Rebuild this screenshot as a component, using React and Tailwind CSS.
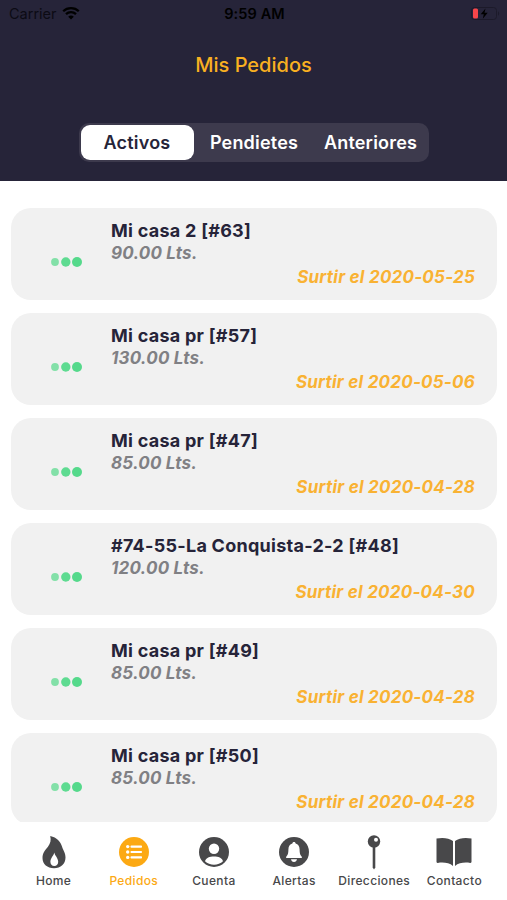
import React, { useState } from "react";

const orders = [
  { id: 63, name: "Mi casa 2", liters: "90.00", date: "2020-05-25" },
  { id: 57, name: "Mi casa pr", liters: "130.00", date: "2020-05-06" },
  { id: 47, name: "Mi casa pr", liters: "85.00", date: "2020-04-28" },
  { id: 48, name: "#74-55-La Conquista-2-2", liters: "120.00", date: "2020-04-30" },
  { id: 49, name: "Mi casa pr", liters: "85.00", date: "2020-04-28" },
  { id: 50, name: "Mi casa pr", liters: "85.00", date: "2020-04-28" },
];

const segments = ["Activos", "Pendietes", "Anteriores"];

const HomeIcon = () => (
  <svg width="24" height="34" viewBox="0 0 24 34" fill="currentColor">
    <path
      fillRule="evenodd"
      d="M8.200 1C15 2.500 18.500 6.500 20 11.500 21.200 15.500 23.500 17.500 23.500 22.500 23.500 29 18.700 33.300 12 33.300S.5 29 .5 23C.5 18 2.800 15.500 5.800 12 8.500 8.500 9.300 5 8.200 1zM12.300 17.500c-.4 3-3.900 5.500-3.900 9.300 0 2.600 1.500 4.200 3.900 4.200s3.900-1.600 3.900-4.200c0-3.800-3.500-6.300-3.900-9.300z"
    />
  </svg>
);

const ListIcon = () => (
  <svg width="30" height="30" viewBox="0 0 30 30">
    <circle cx="15" cy="15" r="15" fill="currentColor" />
    <g fill="#fff">
      <circle cx="8.700" cy="9.600" r="1.700" />
      <circle cx="8.700" cy="15" r="1.700" />
      <circle cx="8.700" cy="20.400" r="1.700" />
      <rect x="11.500" y="8.500" width="11.500" height="2.200" rx="0.800" />
      <rect x="11.500" y="13.900" width="11.500" height="2.200" rx="0.800" />
      <rect x="11.500" y="19.300" width="11.500" height="2.200" rx="0.800" />
    </g>
  </svg>
);

const UserIcon = () => (
  <svg width="30" height="30" viewBox="0 0 30 30">
    <circle cx="15" cy="15" r="15" fill="currentColor" />
    <circle cx="15" cy="11.800" r="5.200" fill="#fff" />
    <path d="M6 24.200c1-3.300 4.600-4.700 9-4.700s8 1.400 9 4.700c-2.300 2.300-5.600 3.500-9 3.500s-6.700-1.200-9-3.500z" fill="#fff" />
  </svg>
);

const BellIcon = () => (
  <svg width="30" height="30" viewBox="0 0 30 30">
    <circle cx="15" cy="15" r="15" fill="currentColor" />
    <path
      d="M15 5c-1 0-1.600.7-1.600 1.600-2.500.8-4 2.900-4 5.800 0 4.500-1 5.800-2 7-.5.500-.5 1.600.5 1.600h14.200c1 0 1-1.100.5-1.600-1-1.200-2-2.500-2-7 0-2.900-1.500-5-4-5.800C16.600 5.700 16 5 15 5zM12 22.300h6c-.2 1.600-1.400 2.700-3 2.700s-2.800-1.100-3-2.700z"
      fill="#fff"
    />
  </svg>
);

const PinIcon = () => (
  <svg width="14" height="35" viewBox="0 0 14 35">
    <path d="M5.700 11h2.600v21.500L7 34.500l-1.300-2z" fill="currentColor" />
    <circle cx="7" cy="6.500" r="6.200" fill="currentColor" />
    <circle cx="9" cy="4.700" r="2" fill="#fff" />
  </svg>
);

const BookIcon = () => (
  <svg width="36" height="30" viewBox="0 0 36 30" fill="currentColor">
    <path d="M.5 1.500C7 .3 13 1 17 4v25c-3.800-3.300-9.500-3.900-15.200-3.100-.8.100-1.300-.4-1.300-1.100z" />
    <path d="M35.500 1.500C29 .3 23 1 19 4v25c3.800-3.300 9.500-3.900 15.200-3.100.8.100 1.300-.4 1.300-1.100z" />
  </svg>
);

const tabs = [
  { label: "Home", icon: HomeIcon },
  { label: "Pedidos", icon: ListIcon },
  { label: "Cuenta", icon: UserIcon },
  { label: "Alertas", icon: BellIcon },
  { label: "Direcciones", icon: PinIcon },
  { label: "Contacto", icon: BookIcon },
];

const StatusBar = () => (
  <div className="grid h-7 grid-cols-3 items-center pl-[9px] pr-[7px] text-black">
    <div className="flex items-center gap-[5px]">
      <span className="text-[14.5px] leading-none text-[#0c0b14]">Carrier</span>
      <svg className="-mt-[2px]" width="18" height="14" viewBox="0 0 18 14" fill="none" stroke="currentColor" strokeWidth="2.300">
        <path d="M1.200 5.200c4.300-4.200 11.300-4.200 15.600 0" />
        <path d="M4 8.200c2.800-2.700 7.200-2.700 10 0" />
        <path d="M9 13.500 6.200 10.700c1.600-1.500 4-1.500 5.600 0z" fill="currentColor" stroke="none" />
      </svg>
    </div>
    <span className="text-center text-[14.5px] font-semibold leading-none tracking-[0.100px]">9:59 AM</span>
    <svg className="-mt-px justify-self-end" width="29" height="13" viewBox="0 0 29 13">
      <rect x="0.500" y="0.500" width="25" height="12" rx="3" fill="none" stroke="#1c1a2a" />
      <rect x="2" y="1.500" width="5" height="10" rx="1.500" fill="#f8464a" />
      <path d="M14.500 1.500 9.700 7.300h3.100l-1 4.400 4.900-6h-3.200z" fill="#000" />
      <path d="M27 4.300c1.500.8 1.500 3.600 0 4.400z" fill="#1c1a2a" />
    </svg>
  </div>
);

const OrderCard = ({ order }) => (
  <div className="flex h-[92px] shrink-0 rounded-[20px] bg-[#f1f1f1] pr-[22px]">
    <div className="flex w-[100px] shrink-0 items-center pl-10 pt-4">
      <svg width="32" height="12" viewBox="0 0 32 12">
        <circle cx="4" cy="6" r="3.900" fill="#83e0a8" />
        <circle cx="14.800" cy="6" r="4.700" fill="#5edb91" />
        <circle cx="26" cy="6" r="5" fill="#55d98b" />
      </svg>
    </div>
    <div className="flex flex-1 flex-col pt-[11px]">
      <h2 className="text-[18px] font-[650] leading-[23px] tracking-[0.260px] text-[#262439]">
        {order.name} [#{order.id}]
      </h2>
      <p className="text-[17px] font-[650] italic leading-[22px] tracking-[0.200px] text-[#808084]">
        {order.liters} Lts.
      </p>
      <p className="mt-[2px] text-right text-[17px] font-[650] italic leading-[23px] tracking-[0.230px] text-[#f9b233]">
        Surtir el {order.date}
      </p>
    </div>
  </div>
);

const App = () => {
  const [segment, setSegment] = useState("Activos");
  const [tab, setTab] = useState("Pedidos");

  return (
    <div className="flex h-[900px] w-[507px] flex-col overflow-hidden bg-white font-['Inter',sans-serif]">
      <header className="flex h-[181px] shrink-0 flex-col bg-[#262439]">
        <StatusBar />
        <h1 className="mt-[23px] text-center text-[20px] font-[550] leading-7 text-[#f9b021]">
          Mis Pedidos
        </h1>
        <div className="mx-auto mt-[44px] grid h-[39px] w-[350px] grid-cols-[113px_117px_116px] rounded-[10px] bg-[#3d3a4d] p-[2px]">
          {segments.map((item) => (
            <button
              key={item}
              type="button"
              onClick={() => setSegment(item)}
              className={`rounded-[9px] text-[18px] font-semibold tracking-[0.200px] ${
                segment === item ? "bg-white text-[#262439]" : "pl-1 text-white"
              }`}
            >
              {item}
            </button>
          ))}
        </div>
      </header>

      <main className="flex min-h-0 flex-1 flex-col gap-[13px] overflow-hidden pl-[11px] pr-[10px] pt-[26.5px]">
        {orders.map((order) => (
          <OrderCard key={order.id} order={order} />
        ))}
      </main>

      <nav className="grid h-[78px] shrink-0 grid-cols-6 bg-white px-[13px]">
        {tabs.map(({ label, icon: Icon }) => (
          <button
            key={label}
            type="button"
            onClick={() => setTab(label)}
            className={`flex flex-col items-center pl-px pt-[12px] ${
              tab === label ? "text-[#fca913]" : "text-[#48484a]"
            }`}
          >
            <span className="flex h-9 items-center justify-center">
              <Icon />
            </span>
            <span className="mt-[3px] text-[12px] font-medium leading-4 tracking-[0.350px]">
              {label}
            </span>
          </button>
        ))}
      </nav>
    </div>
  );
};

export default App;
